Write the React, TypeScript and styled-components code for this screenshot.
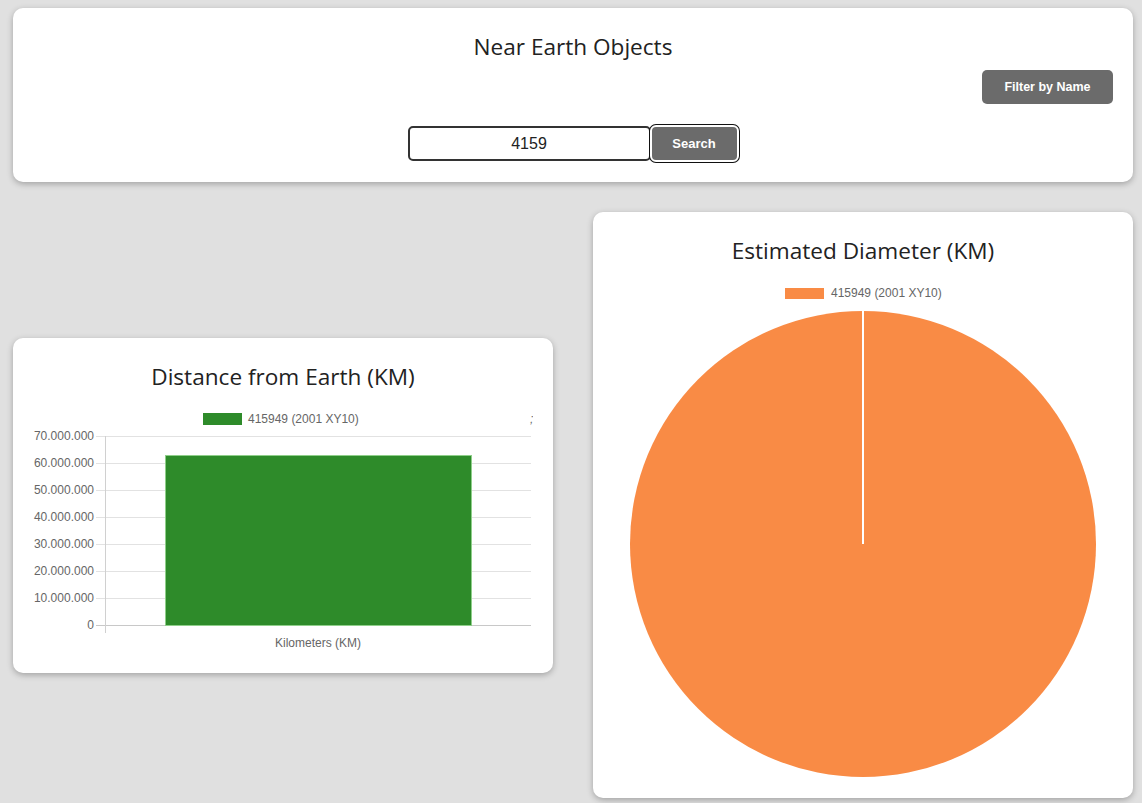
import React from "react";
import styled, { createGlobalStyle } from "styled-components";

const Global = createGlobalStyle`
  html, body { margin: 0; padding: 0; background: #e0e0e0; }
  body { font-family: "Liberation Sans", Arial, sans-serif; }
`;

const Page = styled.div`
  padding: 8px 9px 20px 13px;
  display: flex;
  flex-direction: column;
  gap: 30px;
`;

const Card = styled.div`
  background: #fff;
  border-radius: 10px;
  box-shadow: 0 2px 6px rgba(0, 0, 0, 0.28);
`;

const HeaderCard = styled(Card)`
  padding: 24px 20px 20px;
  display: flex;
  flex-direction: column;
`;

const Title = styled.h1`
  margin: 0;
  font-family: "Open Sans", "Segoe UI", sans-serif;
  font-weight: 400;
  font-size: 22.6px;
  line-height: 30px;
  color: #222;
  text-align: center;
`;

const FilterRow = styled.div`
  display: flex;
  justify-content: flex-end;
  margin-top: 8px;
`;

const GrayButton = styled.button`
  background: #6b6b6b;
  color: #fff;
  font-family: "Liberation Sans", Arial, sans-serif;
  font-weight: 700;
  font-size: 12.5px;
  border: none;
  border-radius: 5px;
  height: 34px;
  padding: 0;
  width: 131px;
  cursor: pointer;
`;

const SearchRow = styled.div`
  display: flex;
  justify-content: center;
  align-items: center;
  margin-top: 21px;
`;

const SearchInput = styled.input`
  box-sizing: border-box;
  width: 243px;
  height: 35px;
  border: 2px solid #333;
  border-radius: 5px;
  text-align: center;
  font-family: "Liberation Sans", Arial, sans-serif;
  font-size: 16px;
  color: #222;
  outline: none;
  padding: 0;
`;

const SearchButton = styled.button`
  box-sizing: border-box;
  margin-left: -1px;
  width: 89px;
  height: 37px;
  background: #6b6b6b;
  color: #fff;
  font-family: "Liberation Sans", Arial, sans-serif;
  font-weight: 700;
  font-size: 13px;
  border: 2px solid #fff;
  box-shadow: 0 0 0 1px #111;
  border-radius: 6px;
  padding: 0;
`;

const ChartsRow = styled.div`
  display: flex;
  align-items: center;
  gap: 40px;
`;

const ChartCard = styled(Card)`
  width: 540px;
  box-sizing: border-box;
  padding: 24px 20px 20px;
  display: flex;
  flex-direction: column;
  align-items: center;
`;

const ChartTitle = styled.h2<{ $gap: number }>`
  margin: 0 0 ${(p) => p.$gap}px;
  font-family: "Open Sans", "Segoe UI", sans-serif;
  font-weight: 400;
  font-size: 22.6px;
  line-height: 30px;
  color: #222;
  text-align: center;
`;

const Svg = styled.svg`
  display: block;
  font-family: "Liberation Sans", Arial, sans-serif;
`;

const BarChart = () => {
  const labels = ["70.000.000", "60.000.000", "50.000.000", "40.000.000", "30.000.000", "20.000.000", "10.000.000", "0"];
  return (
    <Svg width={500} height={250} viewBox="0 0 500 250">
      <rect x={170} y={10} width={39} height={12} fill="#2e8b2a" />
      <text x={215} y={20} fontSize={12} fill="#666">415949 (2001 XY10)</text>
      <text x={497} y={20} fontSize={12} fill="#666" fontStyle="italic">;</text>
      {labels.map((l, i) => {
        const y = 33 + 27 * i;
        return (
          <g key={l}>
            <line x1={63} x2={498} y1={y + 0.5} y2={y + 0.5} stroke={i === 7 ? "#c8c8c8" : "#e2e2e2"} strokeWidth={1} />
            <text x={61} y={y + 4} fontSize={12} fill="#666" textAnchor="end">{l}</text>
          </g>
        );
      })}
      <line x1={72.5} x2={72.5} y1={33} y2={230} stroke="#d0d0d0" strokeWidth={1} />
      <rect x={132.5} y={52.5} width={306} height={170} fill="#2e8b2a" stroke="#8fcf8a" strokeWidth={1} />
      <text x={285} y={244} fontSize={12} fill="#666" textAnchor="middle">Kilometers (KM)</text>
    </Svg>
  );
};

const PieChart = () => (
  <Svg width={500} height={501} viewBox="0 0 500 501">
    <rect x={172} y={11} width={39} height={11} fill="#f98b45" />
    <text x={218} y={20} fontSize={12} fill="#666">415949 (2001 XY10)</text>
    <circle cx={250} cy={267} r={233} fill="#f98b45" />
    <line x1={250} x2={250} y1={267} y2={34} stroke="#fff" strokeWidth={2} />
  </Svg>
);

export default function App() {
  return (
    <>
      <Global />
      <Page>
        <HeaderCard>
          <Title>Near Earth Objects</Title>
          <FilterRow>
            <GrayButton>Filter by Name</GrayButton>
          </FilterRow>
          <SearchRow>
            <SearchInput defaultValue="4159" />
            <SearchButton>Search</SearchButton>
          </SearchRow>
        </HeaderCard>
        <ChartsRow>
          <ChartCard>
            <ChartTitle $gap={11}>Distance from Earth (KM)</ChartTitle>
            <BarChart />
          </ChartCard>
          <ChartCard>
            <ChartTitle $gap={11}>Estimated Diameter (KM)</ChartTitle>
            <PieChart />
          </ChartCard>
        </ChartsRow>
      </Page>
    </>
  );
}
